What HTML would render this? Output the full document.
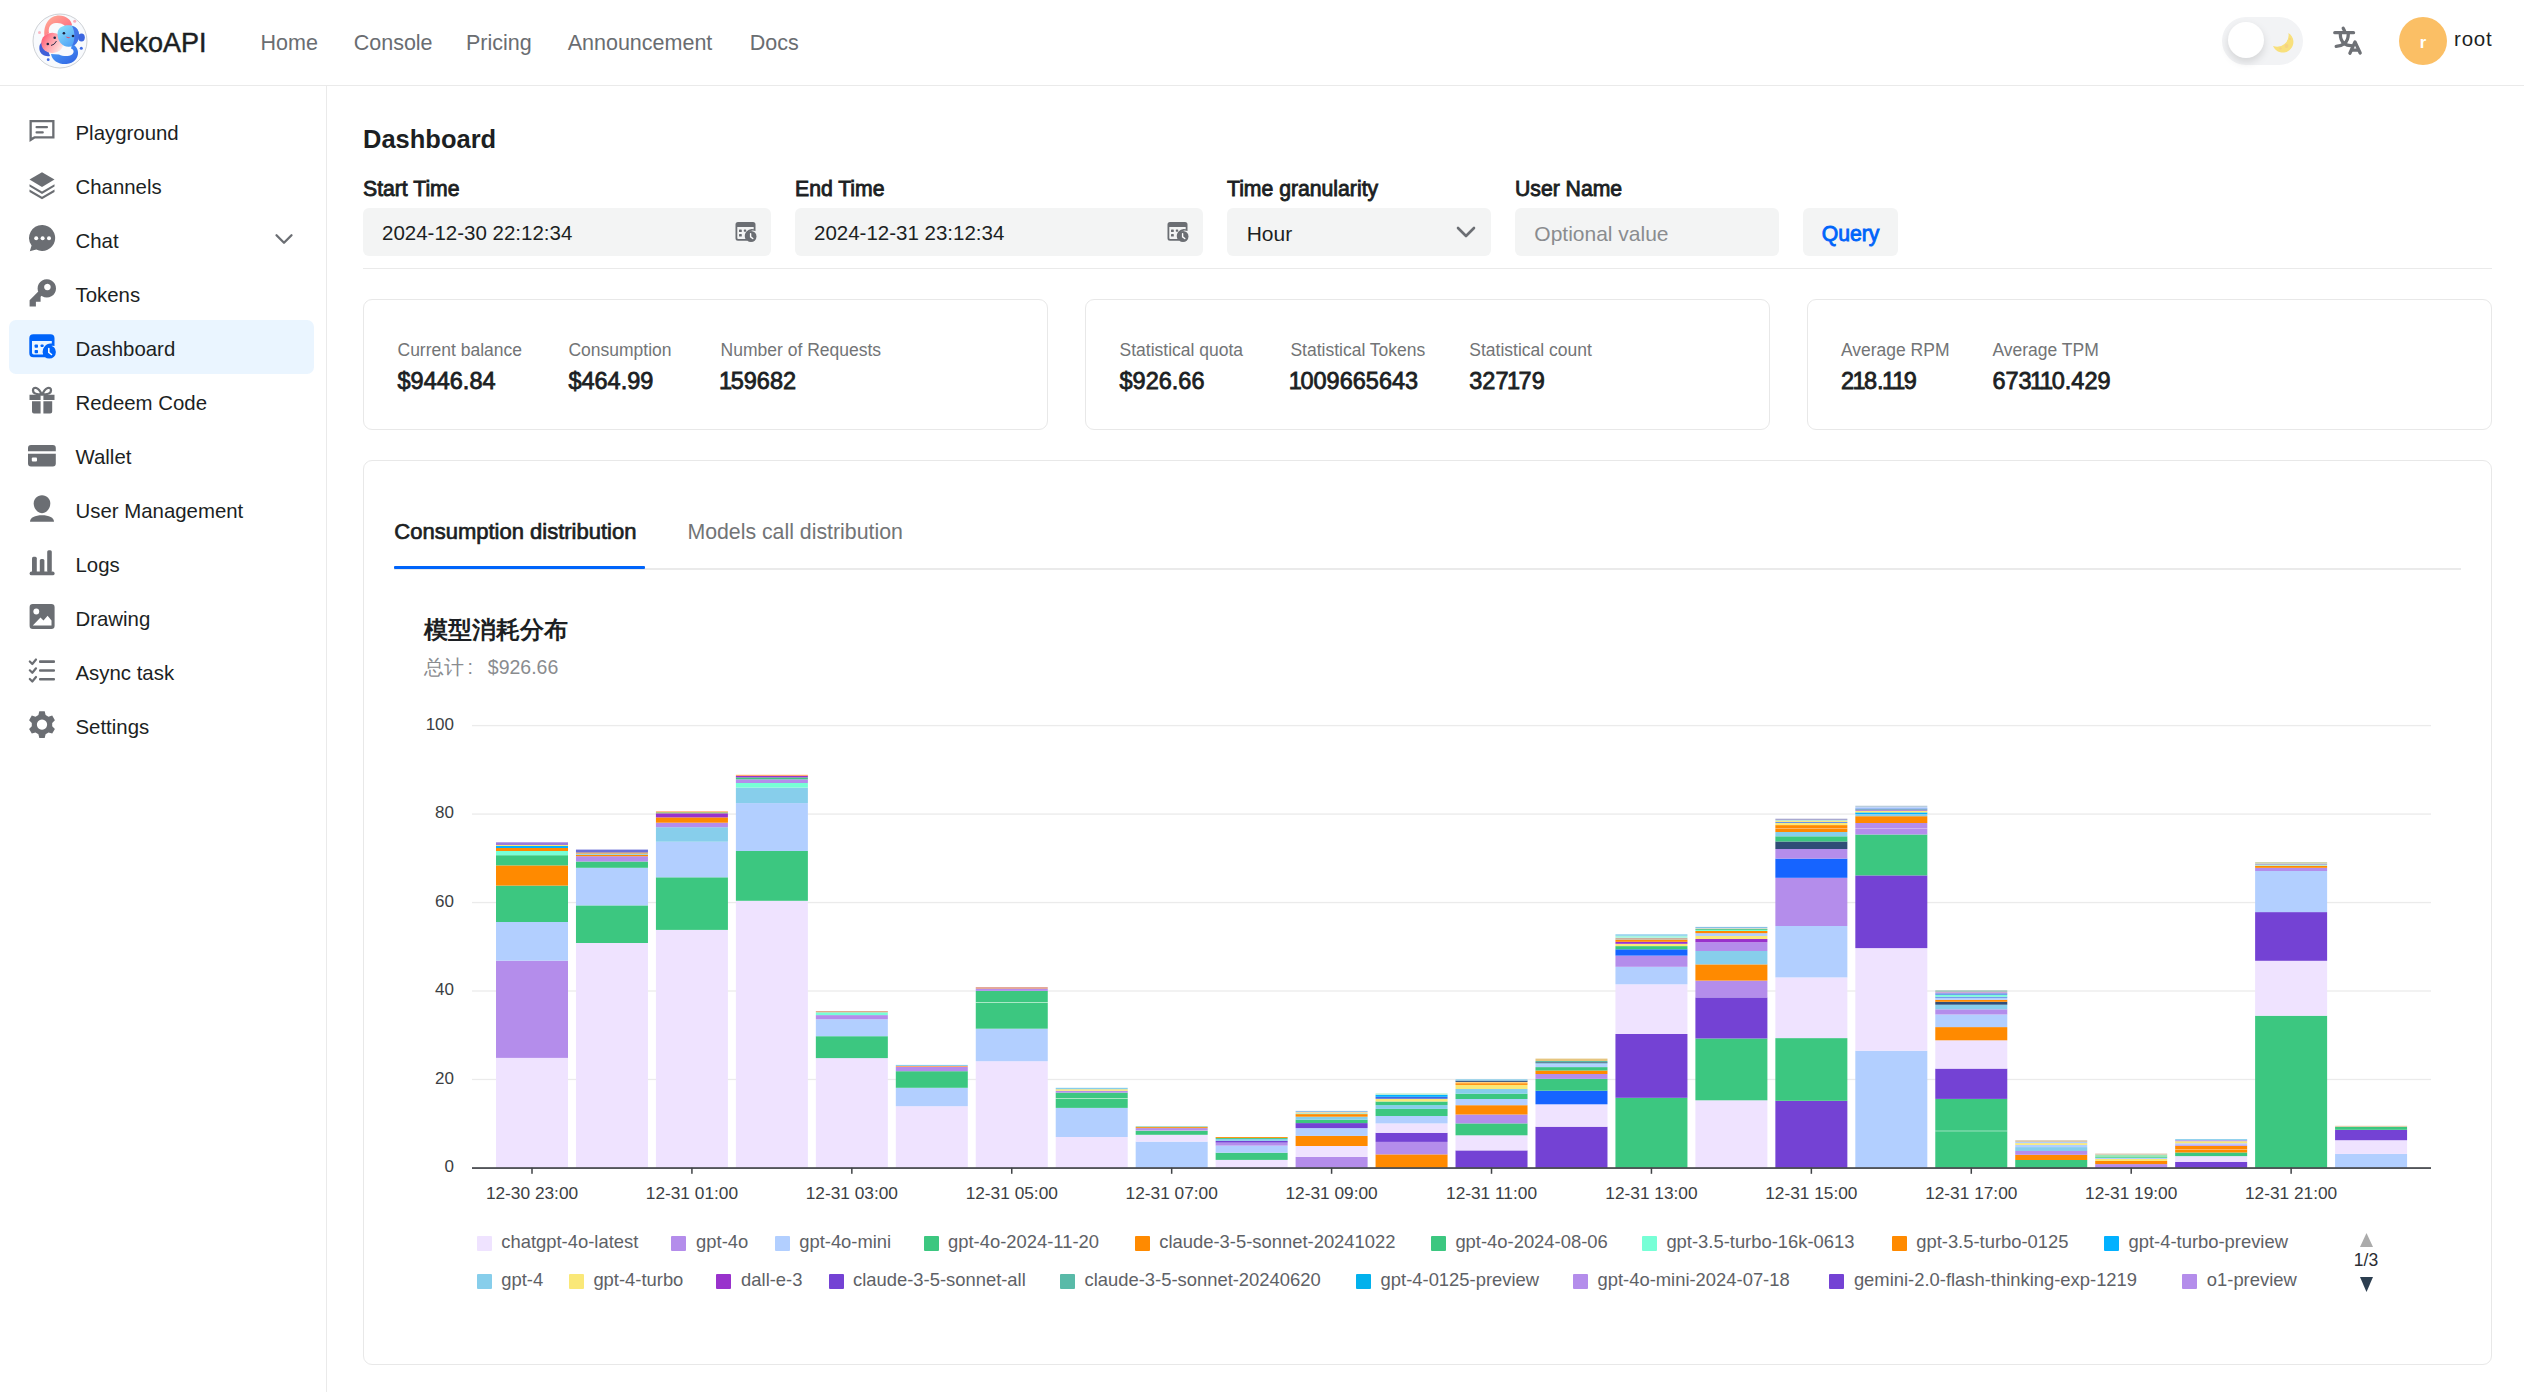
<!DOCTYPE html>
<html><head><meta charset="utf-8"><title>NekoAPI Dashboard</title>
<style>
html,body{margin:0;padding:0;background:#fff;}
body{width:2524px;height:1392px;position:relative;overflow:hidden;font-family:"Liberation Sans",sans-serif;}
.t{position:absolute;white-space:nowrap;}
</style></head><body>
<div style="position:absolute;left:0px;top:85px;width:2524px;height:1px;background:#EAEAEA"></div>
<svg style="position:absolute;left:28px;top:10px" width="64" height="64" viewBox="0 0 64 64">
<defs>
<linearGradient id="gp" x1="0" y1="0" x2="1" y2="1"><stop offset="0" stop-color="#FFB39A"/><stop offset="1" stop-color="#FF5C78"/></linearGradient>
<linearGradient id="gb" x1="0" y1="0" x2="1" y2="1"><stop offset="0" stop-color="#4FA8FF"/><stop offset="1" stop-color="#2F5FE0"/></linearGradient>
<linearGradient id="gc" x1="0" y1="0" x2="0.8" y2="1"><stop offset="0" stop-color="#90E6FA"/><stop offset="1" stop-color="#4A9CF6"/></linearGradient>
<linearGradient id="gf" x1="0" y1="0.3" x2="1" y2="0.9"><stop offset="0" stop-color="#FF5D74"/><stop offset="0.35" stop-color="#FF9AA5"/><stop offset="1" stop-color="#FFF6F0"/></linearGradient>
</defs>
<circle cx="32" cy="31" r="27" fill="#F8FAFD" stroke="#C2C5CA" stroke-width="0.8"/>
<path fill-rule="evenodd" fill="url(#gp)" d="M16.5 26 C15 14 22 5.5 31 5.5 C38 5.5 43.5 10 44 15 L40 22 C38 15 34 12.5 28 13 C22 13.5 20 18 21 23 Z"/>
<path fill="#3F5FD8" d="M11.5 40 C10.5 35 13 31.5 17 31.5 L22 46 C17 47 12.5 44.5 11.5 40 Z"/>
<path fill-rule="evenodd" fill="url(#gb)" d="M23 44 C24 51 31 54.5 38.5 54 C46 53.5 50.5 48 50 42 C49.5 37 46 34.5 44 34.5 L43 38.5 C46 39.5 46.5 42.5 44 44.5 C41 46.5 35 46.5 31 44.5 Z"/>
<ellipse cx="24.3" cy="33" rx="11" ry="10.2" fill="url(#gf)"/>
<path fill="url(#gc)" d="M29.5 24 C29.5 17.5 35 15 41.5 15.3 C47 15.5 51 19 51 25 C51 32 47 37 40.5 36.8 C34 36.5 29.5 31 29.5 24 Z"/>
<ellipse cx="53.5" cy="27.5" rx="3.3" ry="4" fill="#3C66E0"/>
<path fill="#3E6AE4" opacity="0.85" d="M44 16 C49 17 51.5 21 51 26 C50.5 31 48 35 44 36 C47 31 47.5 22 44 16 Z"/>
<circle cx="35.9" cy="23.2" r="1.3" fill="#1D2340"/><circle cx="45" cy="26" r="1.3" fill="#1D2340"/>
<path d="M37.5 26.5 Q40 29.5 42.5 27.5 Z" fill="#E0506A"/>
<circle cx="19.8" cy="34" r="1.3" fill="#1D2340"/><circle cx="26.7" cy="27.8" r="1.3" fill="#1D2340"/>
<path d="M23 35.5 Q26.5 35 28.5 31" stroke="#1D2340" stroke-width="0.9" fill="none"/>
<circle cx="46.7" cy="11.3" r="1.5" fill="#FF8A9A" opacity="0.7"/><circle cx="11.5" cy="22.5" r="1.5" fill="#FF8A9A" opacity="0.6"/>
<circle cx="53.3" cy="38.2" r="1.5" fill="#3E6BE6"/><circle cx="20.2" cy="49.7" r="1.4" fill="#3E6BE6"/>
</svg>
<div class="t" style="left:100px;top:30.14px;font-size:27px;line-height:27px;color:#1C1F23;font-weight:400;-webkit-text-stroke:0.45px #1C1F23;">NekoAPI</div>
<div class="t" style="left:260.6px;top:32.70px;font-size:21.5px;line-height:21.5px;color:#6A6D71;font-weight:400;">Home</div>
<div class="t" style="left:353.7px;top:32.70px;font-size:21.5px;line-height:21.5px;color:#6A6D71;font-weight:400;">Console</div>
<div class="t" style="left:465.9px;top:32.70px;font-size:21.5px;line-height:21.5px;color:#6A6D71;font-weight:400;">Pricing</div>
<div class="t" style="left:567.7px;top:32.70px;font-size:21.5px;line-height:21.5px;color:#6A6D71;font-weight:400;">Announcement</div>
<div class="t" style="left:749.8px;top:32.70px;font-size:21.5px;line-height:21.5px;color:#6A6D71;font-weight:400;">Docs</div>
<div style="position:absolute;left:2222px;top:17px;width:81px;height:48px;background:#F2F3F5;border-radius:24px"></div>
<div style="position:absolute;left:2228px;top:22px;width:36px;height:36px;background:#fff;border-radius:50%;box-shadow:0 4px 8px rgba(0,0,0,0.13)"></div>
<svg style="position:absolute;left:2262px;top:24px" width="40" height="36" viewBox="2262 24 40 36"><path d="M2288.4 33 A10.6 10.6 0 1 1 2273 46 A11.6 11.6 0 0 0 2288.4 33 Z" fill="#F8E07C"/><circle cx="2286.5" cy="46" r="2" fill="#F5D282"/><circle cx="2280.5" cy="48.5" r="1.2" fill="#F5D282"/><circle cx="2290" cy="39" r="1" fill="#F5D282"/></svg>
<svg style="position:absolute;left:2325px;top:20px" width="45" height="42" viewBox="2325 20 45 42">
<g fill="none" stroke="#6E7176" stroke-width="3.3" stroke-linecap="round" stroke-linejoin="round">
<path d="M2334.8 32.7 H2353.5"/><path d="M2343.2 28.3 L2344.6 31"/>
<path d="M2340.3 33.8 C2340.3 38.5 2341.8 41.8 2344.3 43.6 C2346.5 45.2 2349 45.7 2351.3 45.6"/>
<path d="M2348.3 33.8 C2348.3 38.5 2346.8 41.8 2344.3 43.6 C2342 45.3 2339 46.2 2336.2 46.4"/>
<path d="M2349.9 53.2 L2355 41.9 L2360.2 53"/><path d="M2352.2 50.2 H2357.8"/>
</g></svg>
<div style="position:absolute;left:2399px;top:17px;width:48px;height:48px;background:#FBBF65;border-radius:50%"></div>
<div class="t" style="left:2123px;width:600px;text-align:center;top:34.13px;font-size:16.5px;line-height:16.5px;color:#fff;font-weight:700;">r</div>
<div class="t" style="left:2454px;top:28.55px;font-size:20.5px;line-height:20.5px;color:#1C1F23;font-weight:400;letter-spacing:0.8px;">root</div>
<div style="position:absolute;left:326px;top:86px;width:1px;height:1306px;background:#EAEAEA"></div>
<div style="position:absolute;left:9px;top:320px;width:305px;height:54px;background:#EAF5FF;border-radius:7px"></div>
<div class="t" style="left:75.5px;top:122.53px;font-size:20.4px;line-height:20.4px;color:#1C1F23;font-weight:400;">Playground</div>
<div class="t" style="left:75.5px;top:176.53px;font-size:20.4px;line-height:20.4px;color:#1C1F23;font-weight:400;">Channels</div>
<div class="t" style="left:75.5px;top:230.53px;font-size:20.4px;line-height:20.4px;color:#1C1F23;font-weight:400;">Chat</div>
<div class="t" style="left:75.5px;top:284.53px;font-size:20.4px;line-height:20.4px;color:#1C1F23;font-weight:400;">Tokens</div>
<div class="t" style="left:75.5px;top:338.53px;font-size:20.4px;line-height:20.4px;color:#1C1F23;font-weight:400;">Dashboard</div>
<div class="t" style="left:75.5px;top:392.53px;font-size:20.4px;line-height:20.4px;color:#1C1F23;font-weight:400;">Redeem Code</div>
<div class="t" style="left:75.5px;top:446.53px;font-size:20.4px;line-height:20.4px;color:#1C1F23;font-weight:400;">Wallet</div>
<div class="t" style="left:75.5px;top:500.53px;font-size:20.4px;line-height:20.4px;color:#1C1F23;font-weight:400;">User Management</div>
<div class="t" style="left:75.5px;top:554.53px;font-size:20.4px;line-height:20.4px;color:#1C1F23;font-weight:400;">Logs</div>
<div class="t" style="left:75.5px;top:608.53px;font-size:20.4px;line-height:20.4px;color:#1C1F23;font-weight:400;">Drawing</div>
<div class="t" style="left:75.5px;top:662.53px;font-size:20.4px;line-height:20.4px;color:#1C1F23;font-weight:400;">Async task</div>
<div class="t" style="left:75.5px;top:716.53px;font-size:20.4px;line-height:20.4px;color:#1C1F23;font-weight:400;">Settings</div>
<svg style="position:absolute;left:0;top:86px" width="326" height="700" viewBox="0 86 326 700">
<g fill="#6B6E73" stroke="none">
<!-- playground -->
<path d="M29.5 120 H54.5 V138.5 H35 L29.5 142 Z M31.8 122.2 V137.5 L34.3 136.3 H52.2 V122.2 Z"/>
<rect x="35.5" y="126" width="12.5" height="2.3" rx="1"/><rect x="35.5" y="131.2" width="8.3" height="2.3" rx="1"/>
<!-- channels -->
<path d="M42 172.3 L54.5 179.6 L42 187 L29.5 179.6 Z"/>
<path d="M29.5 184.3 L42 191.5 L54.5 184.3 V186.6 L42 193.9 L29.5 186.6 Z"/>
<path d="M29.5 189.6 L42 196.8 L54.5 189.6 V191.9 L42 199.2 L29.5 191.9 Z"/>
<!-- chat -->
<path d="M42.6 225 A13 13 0 1 1 36.3 249.6 L29.8 251.3 L31.6 245.6 A13 13 0 0 1 42.6 225 Z"/>
<circle cx="36.2" cy="238.2" r="2" fill="#fff"/><circle cx="42.6" cy="238.2" r="2" fill="#fff"/><circle cx="49" cy="238.2" r="2" fill="#fff"/>
<!-- key -->
<path fill-rule="evenodd" d="M46.8 279.2 A9.2 9.2 0 1 1 46.79 279.2 Z M47.4 283.7 A3.3 3.3 0 1 0 47.41 283.7 Z"/>
<path d="M38.3 291.6 L29.6 300.3 V306.5 H35.9 V301.7 H40.6 V296.7 L44 293.5 Z"/>
<!-- gift -->
<path d="M29.5 394.7 H40.6 V400 H29.5 Z M43.4 394.7 H54.5 V400 H43.4 Z M32 401.3 H40.6 V413.4 H34 A2 2 0 0 1 32 411.4 Z M43.4 401.3 H52.2 V411.4 A2 2 0 0 1 50.2 413.4 H43.4 Z"/>
<path d="M41.5 394.5 C39 387 33 386 33 390.5 C33 393 36 394.5 41.5 394.5 Z M42.5 394.5 C45 387 51 386 51 390.5 C51 393 48 394.5 42.5 394.5 Z" fill="none" stroke="#6B6E73" stroke-width="2.3"/>
<!-- wallet -->
<path d="M31 445 H52.8 A3 3 0 0 1 55.8 448 V451.2 H28 V448 A3 3 0 0 1 31 445 Z M28 453.8 H55.8 V463.5 A3 3 0 0 1 52.8 466.5 H31 A3 3 0 0 1 28 463.5 Z"/>
<rect x="31.8" y="457.5" width="5.2" height="4" rx="1" fill="#fff"/>
<!-- user -->
<path d="M42 495.3 C47 495.3 50.3 499 50.3 503.5 C50.3 508.5 46.5 513.2 42 513.2 C37.5 513.2 33.7 508.5 33.7 503.5 C33.7 499 37 495.3 42 495.3 Z"/>
<path d="M30 521.8 C30 517.5 35 515.3 42 515.3 C49 515.3 54 517.5 54 521.8 Z"/>
<!-- logs -->
<rect x="32" y="556.8" width="4.8" height="16" rx="1.5"/><rect x="39.8" y="559" width="4.6" height="14" rx="1.5"/><rect x="47.2" y="550.3" width="4.6" height="22" rx="1.5"/>
<rect x="29.6" y="571.5" width="25" height="3.8" rx="1.9"/>
<!-- drawing -->
<path d="M33 604 H51.3 A3.3 3.3 0 0 1 54.6 607.3 V625.7 A3.3 3.3 0 0 1 51.3 629 H33 A3.3 3.3 0 0 1 29.6 625.7 V607.3 A3.3 3.3 0 0 1 33 604 Z"/>
<circle cx="36.3" cy="611.5" r="2.9" fill="#fff"/>
<path d="M32.8 625.6 L40.5 617.5 L43.5 620.5 L47.6 615.8 L51.5 620.5 V625.6 Z" fill="#fff"/>
<!-- async task -->
<g fill="none" stroke="#6B6E73" stroke-width="2.2" stroke-linecap="round" stroke-linejoin="round">
<path d="M29.8 661.5 L32.3 664 L36 659.5"/><path d="M29.8 670.3 L32.3 672.8 L36 668.3"/><path d="M29.8 679 L32.3 681.5 L36 677"/>
</g>
<rect x="39" y="660.3" width="16" height="2.6" rx="1"/><rect x="39" y="669.2" width="16" height="2.6" rx="1"/><rect x="39" y="677.9" width="16" height="2.6" rx="1"/>
<!-- settings -->
<path fill-rule="evenodd" d="M39.3 711.3 H44.7 L45.6 715 L48.5 716.7 L52.2 715.6 L54.9 720.2 L52.2 723 V726.2 L54.9 729 L52.2 733.6 L48.5 732.5 L45.6 734.2 L44.7 737.9 H39.3 L38.4 734.2 L35.5 732.5 L31.8 733.6 L29.1 729 L31.8 726.2 V723 L29.1 720.2 L31.8 715.6 L35.5 716.7 L38.4 715 Z M42 719.5 A5.1 5.1 0 1 0 42.01 719.5 Z"/>
<!-- chevron chat -->
<path d="M276.5 235.3 L284 242.8 L291.5 235.3" fill="none" stroke="#6B6E73" stroke-width="2.3" stroke-linecap="round" stroke-linejoin="round"/>
</g>
<!-- dashboard icon blue -->
<g>
<path fill="#0064FA" fill-rule="evenodd" d="M33.3 334.3 H50.5 A4 4 0 0 1 54.5 338.3 V346 A7.5 7.5 0 0 0 45.5 355.5 L46 357.3 H33.3 A4 4 0 0 1 29.3 353.3 V338.3 A4 4 0 0 1 33.3 334.3 Z M32 341 V352.8 A1.8 1.8 0 0 0 33.8 354.6 H43.5 A8 8 0 0 1 51.8 343.5 V341 Z"/>
<rect x="34.6" y="344.5" width="3.4" height="3.2" rx="0.8" fill="#0064FA"/><rect x="34.6" y="350" width="3.4" height="3.2" rx="0.8" fill="#0064FA"/>
<rect x="40.6" y="344.5" width="3" height="2.6" rx="0.8" fill="#0064FA"/>
<circle cx="49.3" cy="352" r="6.6" fill="#0064FA"/>
<path d="M48.8 348.5 V352.3 L51.5 354.5" fill="none" stroke="#fff" stroke-width="1.6" stroke-linecap="round"/>
</g>
</svg>
<div class="t" style="left:363px;top:127.31px;font-size:25.5px;line-height:25.5px;color:#1C1F23;font-weight:700;">Dashboard</div>
<div class="t" style="left:363px;top:178.35px;font-size:21.2px;line-height:21.2px;color:#1C1F23;font-weight:400;-webkit-text-stroke:0.85px currentColor;">Start Time</div>
<div class="t" style="left:795px;top:178.35px;font-size:21.2px;line-height:21.2px;color:#1C1F23;font-weight:400;-webkit-text-stroke:0.85px currentColor;">End Time</div>
<div class="t" style="left:1227px;top:178.35px;font-size:21.2px;line-height:21.2px;color:#1C1F23;font-weight:400;-webkit-text-stroke:0.85px currentColor;">Time granularity</div>
<div class="t" style="left:1515px;top:178.35px;font-size:21.2px;line-height:21.2px;color:#1C1F23;font-weight:400;-webkit-text-stroke:0.85px currentColor;">User Name</div>
<div style="position:absolute;left:363px;top:208px;width:408px;height:48px;background:#F3F4F4;border-radius:6px"></div>
<div style="position:absolute;left:795px;top:208px;width:408px;height:48px;background:#F3F4F4;border-radius:6px"></div>
<div class="t" style="left:382px;top:222.85px;font-size:20.5px;line-height:20.5px;color:#1C1F23;font-weight:400;">2024-12-30 22:12:34</div>
<div class="t" style="left:814px;top:222.85px;font-size:20.5px;line-height:20.5px;color:#1C1F23;font-weight:400;">2024-12-31 23:12:34</div>
<svg style="position:absolute;left:735px;top:221px" width="22" height="22" viewBox="0 0 22 22">
<path fill="#6B6E73" fill-rule="evenodd" d="M3 1 H18 A2.5 2.5 0 0 1 20.5 3.5 V10 A6.5 6.5 0 0 0 12 18.5 L12.3 19.8 H3 A2.5 2.5 0 0 1 0.5 17.3 V3.5 A2.5 2.5 0 0 1 3 1 Z M2.3 6 V17 A1 1 0 0 0 3.3 18 H10.5 A7 7 0 0 1 18.7 8.3 V6 Z"/>
<rect x="4" y="8.5" width="2.8" height="2.6" rx="0.6" fill="#6B6E73"/><rect x="4" y="13" width="2.8" height="2.6" rx="0.6" fill="#6B6E73"/><rect x="8.8" y="8.5" width="2.4" height="2.2" rx="0.6" fill="#6B6E73"/>
<circle cx="16" cy="15.5" r="5.5" fill="#6B6E73"/><path d="M15.6 12.6 V15.8 L17.8 17.5" fill="none" stroke="#fff" stroke-width="1.4" stroke-linecap="round"/>
</svg>
<svg style="position:absolute;left:1167px;top:221px" width="22" height="22" viewBox="0 0 22 22">
<path fill="#6B6E73" fill-rule="evenodd" d="M3 1 H18 A2.5 2.5 0 0 1 20.5 3.5 V10 A6.5 6.5 0 0 0 12 18.5 L12.3 19.8 H3 A2.5 2.5 0 0 1 0.5 17.3 V3.5 A2.5 2.5 0 0 1 3 1 Z M2.3 6 V17 A1 1 0 0 0 3.3 18 H10.5 A7 7 0 0 1 18.7 8.3 V6 Z"/>
<rect x="4" y="8.5" width="2.8" height="2.6" rx="0.6" fill="#6B6E73"/><rect x="4" y="13" width="2.8" height="2.6" rx="0.6" fill="#6B6E73"/><rect x="8.8" y="8.5" width="2.4" height="2.2" rx="0.6" fill="#6B6E73"/>
<circle cx="16" cy="15.5" r="5.5" fill="#6B6E73"/><path d="M15.6 12.6 V15.8 L17.8 17.5" fill="none" stroke="#fff" stroke-width="1.4" stroke-linecap="round"/>
</svg>
<div style="position:absolute;left:1227px;top:208px;width:264px;height:48px;background:#F3F4F4;border-radius:6px"></div>
<div class="t" style="left:1246.7px;top:222.82px;font-size:21px;line-height:21px;color:#1C1F23;font-weight:400;">Hour</div>
<svg style="position:absolute;left:1455px;top:225px" width="22" height="14" viewBox="0 0 22 14"><path d="M3 3 L11 11 L19 3" fill="none" stroke="#6B6E73" stroke-width="2.6" stroke-linecap="round" stroke-linejoin="round"/></svg>
<div style="position:absolute;left:1515px;top:208px;width:264px;height:48px;background:#F3F4F4;border-radius:6px"></div>
<div class="t" style="left:1534.3px;top:222.82px;font-size:21px;line-height:21px;color:#8A8C8F;font-weight:400;">Optional value</div>
<div style="position:absolute;left:1803px;top:208px;width:95px;height:48px;background:#F3F4F4;border-radius:6px"></div>
<div class="t" style="left:1821.7px;top:222.65px;font-size:21.2px;line-height:21.2px;color:#0064FA;font-weight:400;-webkit-text-stroke:0.85px currentColor;">Query</div>
<div style="position:absolute;left:363px;top:268px;width:2129px;height:1px;background:#EAEAEA"></div>
<div style="position:absolute;left:363px;top:299px;width:685px;height:131px;box-sizing:border-box;border:1px solid #E8E8E8;border-radius:9px;background:#fff"></div>
<div style="position:absolute;left:1085px;top:299px;width:685px;height:131px;box-sizing:border-box;border:1px solid #E8E8E8;border-radius:9px;background:#fff"></div>
<div style="position:absolute;left:1807px;top:299px;width:685px;height:131px;box-sizing:border-box;border:1px solid #E8E8E8;border-radius:9px;background:#fff"></div>
<div class="t" style="left:397.5px;top:342.19px;font-size:17.5px;line-height:17.5px;color:#727476;font-weight:400;">Current balance</div>
<div class="t" style="left:397.5px;top:370.11px;font-size:23.5px;line-height:23.5px;color:#1C1F23;font-weight:400;-webkit-text-stroke:0.8px currentColor;">$9446.84</div>
<div class="t" style="left:568.4px;top:342.19px;font-size:17.5px;line-height:17.5px;color:#727476;font-weight:400;">Consumption</div>
<div class="t" style="left:568.4px;top:370.11px;font-size:23.5px;line-height:23.5px;color:#1C1F23;font-weight:400;-webkit-text-stroke:0.8px currentColor;">$464.99</div>
<div class="t" style="left:720.6px;top:342.19px;font-size:17.5px;line-height:17.5px;color:#727476;font-weight:400;">Number of Requests</div>
<div class="t" style="left:720.6px;top:370.11px;font-size:23.5px;line-height:23.5px;color:#1C1F23;font-weight:400;-webkit-text-stroke:0.8px currentColor;"><span style="margin-left:-1.6px;letter-spacing:-1.4px">1</span>59682</div>
<div class="t" style="left:1119.5px;top:342.19px;font-size:17.5px;line-height:17.5px;color:#727476;font-weight:400;">Statistical quota</div>
<div class="t" style="left:1119.5px;top:370.11px;font-size:23.5px;line-height:23.5px;color:#1C1F23;font-weight:400;-webkit-text-stroke:0.8px currentColor;">$926.66</div>
<div class="t" style="left:1290.4px;top:342.19px;font-size:17.5px;line-height:17.5px;color:#727476;font-weight:400;">Statistical Tokens</div>
<div class="t" style="left:1290.4px;top:370.11px;font-size:23.5px;line-height:23.5px;color:#1C1F23;font-weight:400;-webkit-text-stroke:0.8px currentColor;"><span style="margin-left:-1.6px;letter-spacing:-1.4px">1</span>009665643</div>
<div class="t" style="left:1469.3px;top:342.19px;font-size:17.5px;line-height:17.5px;color:#727476;font-weight:400;">Statistical count</div>
<div class="t" style="left:1469.3px;top:370.11px;font-size:23.5px;line-height:23.5px;color:#1C1F23;font-weight:400;-webkit-text-stroke:0.8px currentColor;">327<span style="margin-left:-1.6px;letter-spacing:-1.4px">1</span>79</div>
<div class="t" style="left:1840.9px;top:342.19px;font-size:17.5px;line-height:17.5px;color:#727476;font-weight:400;">Average RPM</div>
<div class="t" style="left:1840.9px;top:370.11px;font-size:23.5px;line-height:23.5px;color:#1C1F23;font-weight:400;-webkit-text-stroke:0.8px currentColor;">2<span style="margin-left:-1.6px;letter-spacing:-1.4px">1</span>8.<span style="margin-left:-1.6px;letter-spacing:-1.4px">1</span><span style="margin-left:-1.6px;letter-spacing:-1.4px">1</span>9</div>
<div class="t" style="left:1992.4px;top:342.19px;font-size:17.5px;line-height:17.5px;color:#727476;font-weight:400;">Average TPM</div>
<div class="t" style="left:1992.4px;top:370.11px;font-size:23.5px;line-height:23.5px;color:#1C1F23;font-weight:400;-webkit-text-stroke:0.8px currentColor;">673<span style="margin-left:-1.6px;letter-spacing:-1.4px">1</span><span style="margin-left:-1.6px;letter-spacing:-1.4px">1</span>0.429</div>
<div style="position:absolute;left:363px;top:460px;width:2129px;height:905px;box-sizing:border-box;border:1px solid #E8E8E8;border-radius:9px;background:#fff"></div>
<div class="t" style="left:394.3px;top:521.18px;font-size:22px;line-height:22px;color:#1C1F23;font-weight:400;-webkit-text-stroke:0.7px currentColor;">Consumption distribution</div>
<div class="t" style="left:687.4px;top:521.97px;font-size:21.3px;line-height:21.3px;color:#727476;font-weight:400;">Models call distribution</div>
<div style="position:absolute;left:394px;top:568px;width:2067px;height:1.5px;background:#EAEAEA"></div>
<div style="position:absolute;left:394px;top:566px;width:251px;height:3px;background:#0064FA;border-radius:1px"></div>
<div class="t" style="left:424px;top:618.61px;font-size:23.5px;line-height:23.5px;color:#1C1F23;font-weight:700;">模型消耗分布</div>
<div class="t" style="left:424px;top:657.79px;font-size:19.5px;line-height:19.5px;color:#8A8C8F;font-weight:400;">总计</div>
<div class="t" style="left:467.5px;top:657.79px;font-size:19.5px;line-height:19.5px;color:#8A8C8F;font-weight:400;">:</div>
<div class="t" style="left:487.8px;top:657.79px;font-size:19.5px;line-height:19.5px;color:#8A8C8F;font-weight:400;">$926.66</div>
<svg style="position:absolute;left:0;top:0" width="2524" height="1392" viewBox="0 0 2524 1392"><rect x="472" y="1078.83" width="1959" height="1.3" fill="#EBEBEB"/><rect x="472" y="990.36" width="1959" height="1.3" fill="#EBEBEB"/><rect x="472" y="901.89" width="1959" height="1.3" fill="#EBEBEB"/><rect x="472" y="813.42" width="1959" height="1.3" fill="#EBEBEB"/><rect x="472" y="724.95" width="1959" height="1.3" fill="#EBEBEB"/><rect x="496.0" y="1057.90" width="72" height="109.90" fill="#EFE3FF"/><rect x="496.0" y="960.70" width="72" height="97.20" fill="#B48DEB"/><rect x="496.0" y="922.00" width="72" height="38.70" fill="#B2CFFF"/><rect x="496.0" y="885.60" width="72" height="36.40" fill="#3CC780"/><rect x="496.0" y="865.40" width="72" height="20.20" fill="#FF8A00"/><rect x="496.0" y="855.20" width="72" height="10.20" fill="#3CC780"/><rect x="496.0" y="851.00" width="72" height="4.20" fill="#77FFD6"/><rect x="496.0" y="848.00" width="72" height="3.00" fill="#FF8A00"/><rect x="496.0" y="846.00" width="72" height="2.00" fill="#02B1FF"/><rect x="496.0" y="845.00" width="72" height="1.00" fill="#FAE878"/><rect x="496.0" y="842.30" width="72" height="2.70" fill="#9A7BDD"/><rect x="575.96" y="943.00" width="72" height="224.80" fill="#EFE3FF"/><rect x="575.96" y="905.40" width="72" height="37.60" fill="#3CC780"/><rect x="575.96" y="867.80" width="72" height="37.60" fill="#B2CFFF"/><rect x="575.96" y="861.50" width="72" height="6.30" fill="#3CC780"/><rect x="575.96" y="856.20" width="72" height="5.30" fill="#B48DEB"/><rect x="575.96" y="854.80" width="72" height="1.40" fill="#FF8A00"/><rect x="575.96" y="853.50" width="72" height="1.30" fill="#87CEEB"/><rect x="575.96" y="852.50" width="72" height="1.00" fill="#FF8A00"/><rect x="575.96" y="849.60" width="72" height="2.90" fill="#6A6FD8"/><rect x="655.92" y="929.90" width="72" height="237.90" fill="#EFE3FF"/><rect x="655.92" y="877.30" width="72" height="52.60" fill="#3CC780"/><rect x="655.92" y="841.70" width="72" height="35.60" fill="#B2CFFF"/><rect x="655.92" y="827.20" width="72" height="14.50" fill="#87CEEB"/><rect x="655.92" y="822.70" width="72" height="4.50" fill="#B48DEB"/><rect x="655.92" y="817.40" width="72" height="5.30" fill="#FF8A00"/><rect x="655.92" y="813.30" width="72" height="4.10" fill="#9932CC"/><rect x="655.92" y="812.10" width="72" height="1.20" fill="#9CC870"/><rect x="655.92" y="811.20" width="72" height="0.90" fill="#FFB070"/><rect x="735.88" y="900.80" width="72" height="267.00" fill="#EFE3FF"/><rect x="735.88" y="851.00" width="72" height="49.80" fill="#3CC780"/><rect x="735.88" y="803.10" width="72" height="47.90" fill="#B2CFFF"/><rect x="735.88" y="787.60" width="72" height="15.50" fill="#87CEEB"/><rect x="735.88" y="783.00" width="72" height="4.60" fill="#77FFD6"/><rect x="735.88" y="779.30" width="72" height="3.70" fill="#B48DEB"/><rect x="735.88" y="777.40" width="72" height="1.90" fill="#3CC780"/><rect x="735.88" y="775.90" width="72" height="1.50" fill="#9932CC"/><rect x="735.88" y="774.80" width="72" height="1.10" fill="#FFA060"/><rect x="815.8399999999999" y="1058.10" width="72" height="109.70" fill="#EFE3FF"/><rect x="815.8399999999999" y="1036.20" width="72" height="21.90" fill="#3CC780"/><rect x="815.8399999999999" y="1019.20" width="72" height="17.00" fill="#B2CFFF"/><rect x="815.8399999999999" y="1015.10" width="72" height="4.10" fill="#B48DEB"/><rect x="815.8399999999999" y="1012.30" width="72" height="2.80" fill="#77FFD6"/><rect x="815.8399999999999" y="1011.10" width="72" height="1.20" fill="#E0A080"/><rect x="895.8" y="1106.20" width="72" height="61.60" fill="#EFE3FF"/><rect x="895.8" y="1087.80" width="72" height="18.40" fill="#B2CFFF"/><rect x="895.8" y="1071.20" width="72" height="16.60" fill="#3CC780"/><rect x="895.8" y="1066.90" width="72" height="4.30" fill="#B48DEB"/><rect x="895.8" y="1066.00" width="72" height="0.90" fill="#FFA060"/><rect x="895.8" y="1064.90" width="72" height="1.10" fill="#87CEEB"/><rect x="975.76" y="1061.20" width="72" height="106.60" fill="#EFE3FF"/><rect x="975.76" y="1028.70" width="72" height="32.50" fill="#B2CFFF"/><rect x="975.76" y="1002.50" width="72" height="26.20" fill="#3CC780"/><rect x="975.76" y="1002.00" width="72" height="0.50" fill="#B9EDCD"/><rect x="975.76" y="990.90" width="72" height="11.10" fill="#3CC780"/><rect x="975.76" y="988.90" width="72" height="2.00" fill="#B48DEB"/><rect x="975.76" y="987.10" width="72" height="1.80" fill="#E0A090"/><rect x="1055.7199999999998" y="1137.00" width="72" height="30.80" fill="#EFE3FF"/><rect x="1055.7199999999998" y="1107.90" width="72" height="29.10" fill="#B2CFFF"/><rect x="1055.7199999999998" y="1098.60" width="72" height="9.30" fill="#3CC780"/><rect x="1055.7199999999998" y="1098.10" width="72" height="0.50" fill="#B9EDCD"/><rect x="1055.7199999999998" y="1092.60" width="72" height="5.50" fill="#3CC780"/><rect x="1055.7199999999998" y="1090.80" width="72" height="1.80" fill="#B48DEB"/><rect x="1055.7199999999998" y="1089.20" width="72" height="1.60" fill="#FAE878"/><rect x="1055.7199999999998" y="1087.80" width="72" height="1.40" fill="#87CEEB"/><rect x="1135.6799999999998" y="1141.60" width="72" height="26.20" fill="#B2CFFF"/><rect x="1135.6799999999998" y="1134.80" width="72" height="6.80" fill="#EFE3FF"/><rect x="1135.6799999999998" y="1131.00" width="72" height="3.80" fill="#3CC780"/><rect x="1135.6799999999998" y="1130.50" width="72" height="0.50" fill="#9BD8B0"/><rect x="1135.6799999999998" y="1128.10" width="72" height="2.40" fill="#B48DEB"/><rect x="1135.6799999999998" y="1127.10" width="72" height="1.00" fill="#FF8A00"/><rect x="1135.6799999999998" y="1126.20" width="72" height="0.90" fill="#9CD8C0"/><rect x="1215.6399999999999" y="1159.90" width="72" height="7.90" fill="#EFE3FF"/><rect x="1215.6399999999999" y="1152.70" width="72" height="7.20" fill="#3CC780"/><rect x="1215.6399999999999" y="1145.60" width="72" height="7.10" fill="#B2CFFF"/><rect x="1215.6399999999999" y="1142.60" width="72" height="3.00" fill="#B48DEB"/><rect x="1215.6399999999999" y="1140.90" width="72" height="1.70" fill="#7442D4"/><rect x="1215.6399999999999" y="1138.90" width="72" height="2.00" fill="#87CEEB"/><rect x="1215.6399999999999" y="1137.90" width="72" height="1.00" fill="#3CC780"/><rect x="1215.6399999999999" y="1137.00" width="72" height="0.90" fill="#FF8A00"/><rect x="1295.6" y="1156.90" width="72" height="10.90" fill="#B48DEB"/><rect x="1295.6" y="1146.00" width="72" height="10.90" fill="#EFE3FF"/><rect x="1295.6" y="1135.90" width="72" height="10.10" fill="#FF8A00"/><rect x="1295.6" y="1128.10" width="72" height="7.80" fill="#B2CFFF"/><rect x="1295.6" y="1123.10" width="72" height="5.00" fill="#7442D4"/><rect x="1295.6" y="1119.70" width="72" height="3.40" fill="#3CC780"/><rect x="1295.6" y="1116.70" width="72" height="3.00" fill="#87CEEB"/><rect x="1295.6" y="1114.10" width="72" height="2.60" fill="#FF8A00"/><rect x="1295.6" y="1113.00" width="72" height="1.10" fill="#B9EDCD"/><rect x="1295.6" y="1111.90" width="72" height="1.10" fill="#F0D8B0"/><rect x="1295.6" y="1110.90" width="72" height="1.00" fill="#87B8E8"/><rect x="1375.56" y="1154.40" width="72" height="13.40" fill="#FF8A00"/><rect x="1375.56" y="1141.90" width="72" height="12.50" fill="#B48DEB"/><rect x="1375.56" y="1132.80" width="72" height="9.10" fill="#7442D4"/><rect x="1375.56" y="1123.40" width="72" height="9.40" fill="#EFE3FF"/><rect x="1375.56" y="1116.00" width="72" height="7.40" fill="#B2CFFF"/><rect x="1375.56" y="1108.90" width="72" height="7.10" fill="#3CC780"/><rect x="1375.56" y="1105.10" width="72" height="3.80" fill="#87CEEB"/><rect x="1375.56" y="1101.50" width="72" height="3.60" fill="#3CC780"/><rect x="1375.56" y="1098.80" width="72" height="2.70" fill="#FAE878"/><rect x="1375.56" y="1096.80" width="72" height="2.00" fill="#4169E1"/><rect x="1375.56" y="1094.80" width="72" height="2.00" fill="#02B1FF"/><rect x="1375.56" y="1093.40" width="72" height="1.40" fill="#B9EDCD"/><rect x="1455.52" y="1150.40" width="72" height="17.40" fill="#7442D4"/><rect x="1455.52" y="1135.30" width="72" height="15.10" fill="#EFE3FF"/><rect x="1455.52" y="1123.40" width="72" height="11.90" fill="#3CC780"/><rect x="1455.52" y="1114.50" width="72" height="8.90" fill="#B48DEB"/><rect x="1455.52" y="1105.20" width="72" height="9.30" fill="#FF8A00"/><rect x="1455.52" y="1099.00" width="72" height="6.20" fill="#B2CFFF"/><rect x="1455.52" y="1093.70" width="72" height="5.30" fill="#3CC780"/><rect x="1455.52" y="1089.00" width="72" height="4.70" fill="#87CEEB"/><rect x="1455.52" y="1084.90" width="72" height="4.10" fill="#FAE878"/><rect x="1455.52" y="1083.20" width="72" height="1.70" fill="#FF8A00"/><rect x="1455.52" y="1081.90" width="72" height="1.30" fill="#FFCE7A"/><rect x="1455.52" y="1080.60" width="72" height="1.30" fill="#304D77"/><rect x="1455.52" y="1079.30" width="72" height="1.30" fill="#87CEEB"/><rect x="1535.48" y="1126.70" width="72" height="41.10" fill="#7442D4"/><rect x="1535.48" y="1104.30" width="72" height="22.40" fill="#EFE3FF"/><rect x="1535.48" y="1090.70" width="72" height="13.60" fill="#1664FF"/><rect x="1535.48" y="1078.90" width="72" height="11.80" fill="#3CC780"/><rect x="1535.48" y="1074.00" width="72" height="4.90" fill="#B48DEB"/><rect x="1535.48" y="1070.50" width="72" height="3.50" fill="#FF8A00"/><rect x="1535.48" y="1067.10" width="72" height="3.40" fill="#3CC780"/><rect x="1535.48" y="1064.20" width="72" height="2.90" fill="#B2CFFF"/><rect x="1535.48" y="1063.10" width="72" height="1.10" fill="#87CEEB"/><rect x="1535.48" y="1062.10" width="72" height="1.00" fill="#5A7090"/><rect x="1535.48" y="1061.00" width="72" height="1.10" fill="#59BAA8"/><rect x="1535.48" y="1058.60" width="72" height="2.40" fill="#E5C580"/><rect x="1615.4399999999998" y="1097.80" width="72" height="70.00" fill="#3CC780"/><rect x="1615.4399999999998" y="1034.00" width="72" height="63.80" fill="#7442D4"/><rect x="1615.4399999999998" y="984.30" width="72" height="49.70" fill="#EFE3FF"/><rect x="1615.4399999999998" y="966.80" width="72" height="17.50" fill="#B2CFFF"/><rect x="1615.4399999999998" y="955.60" width="72" height="11.20" fill="#B48DEB"/><rect x="1615.4399999999998" y="949.30" width="72" height="6.30" fill="#1664FF"/><rect x="1615.4399999999998" y="946.10" width="72" height="3.20" fill="#3CC780"/><rect x="1615.4399999999998" y="943.80" width="72" height="2.30" fill="#FAE878"/><rect x="1615.4399999999998" y="941.80" width="72" height="2.00" fill="#9932CC"/><rect x="1615.4399999999998" y="939.70" width="72" height="2.10" fill="#FF8A00"/><rect x="1615.4399999999998" y="937.80" width="72" height="1.90" fill="#C8B0A0"/><rect x="1615.4399999999998" y="935.80" width="72" height="2.00" fill="#A8F5DE"/><rect x="1615.4399999999998" y="934.30" width="72" height="1.50" fill="#87CEEB"/><rect x="1695.3999999999999" y="1100.30" width="72" height="67.50" fill="#EFE3FF"/><rect x="1695.3999999999999" y="1038.50" width="72" height="61.80" fill="#3CC780"/><rect x="1695.3999999999999" y="997.40" width="72" height="41.10" fill="#7442D4"/><rect x="1695.3999999999999" y="980.60" width="72" height="16.80" fill="#B48DEB"/><rect x="1695.3999999999999" y="964.40" width="72" height="16.20" fill="#FF8A00"/><rect x="1695.3999999999999" y="951.00" width="72" height="13.40" fill="#87CEEB"/><rect x="1695.3999999999999" y="942.20" width="72" height="8.80" fill="#B48DEB"/><rect x="1695.3999999999999" y="939.00" width="72" height="3.20" fill="#9932CC"/><rect x="1695.3999999999999" y="936.00" width="72" height="3.00" fill="#FAE878"/><rect x="1695.3999999999999" y="933.20" width="72" height="2.80" fill="#B2CFFF"/><rect x="1695.3999999999999" y="931.00" width="72" height="2.20" fill="#FF8A00"/><rect x="1695.3999999999999" y="930.00" width="72" height="1.00" fill="#77FFD6"/><rect x="1695.3999999999999" y="929.10" width="72" height="0.90" fill="#3CC780"/><rect x="1695.3999999999999" y="928.30" width="72" height="0.80" fill="#F0E0B0"/><rect x="1695.3999999999999" y="926.90" width="72" height="1.40" fill="#87C0E8"/><rect x="1775.36" y="1100.80" width="72" height="67.00" fill="#7442D4"/><rect x="1775.36" y="1038.10" width="72" height="62.70" fill="#3CC780"/><rect x="1775.36" y="977.40" width="72" height="60.70" fill="#EFE3FF"/><rect x="1775.36" y="926.00" width="72" height="51.40" fill="#B2CFFF"/><rect x="1775.36" y="877.80" width="72" height="48.20" fill="#B48DEB"/><rect x="1775.36" y="858.60" width="72" height="19.20" fill="#1664FF"/><rect x="1775.36" y="849.00" width="72" height="9.60" fill="#B48DEB"/><rect x="1775.36" y="841.50" width="72" height="7.50" fill="#304D77"/><rect x="1775.36" y="836.30" width="72" height="5.20" fill="#3CC780"/><rect x="1775.36" y="832.00" width="72" height="4.30" fill="#87CEEB"/><rect x="1775.36" y="828.90" width="72" height="3.10" fill="#FF8A00"/><rect x="1775.36" y="828.40" width="72" height="0.50" fill="#FFB070"/><rect x="1775.36" y="825.10" width="72" height="3.30" fill="#FF8A00"/><rect x="1775.36" y="823.00" width="72" height="2.10" fill="#FAE878"/><rect x="1775.36" y="821.90" width="72" height="1.10" fill="#6495ED"/><rect x="1775.36" y="821.00" width="72" height="0.90" fill="#FAE878"/><rect x="1775.36" y="820.10" width="72" height="0.90" fill="#B9EDCD"/><rect x="1775.36" y="818.70" width="72" height="1.40" fill="#A8A8D0"/><rect x="1855.32" y="1050.70" width="72" height="117.10" fill="#B2CFFF"/><rect x="1855.32" y="948.10" width="72" height="102.60" fill="#EFE3FF"/><rect x="1855.32" y="875.40" width="72" height="72.70" fill="#7442D4"/><rect x="1855.32" y="834.50" width="72" height="40.90" fill="#3CC780"/><rect x="1855.32" y="828.90" width="72" height="5.60" fill="#B48DEB"/><rect x="1855.32" y="828.40" width="72" height="0.50" fill="#C8A8F0"/><rect x="1855.32" y="823.00" width="72" height="5.40" fill="#B48DEB"/><rect x="1855.32" y="816.20" width="72" height="6.80" fill="#FF8A00"/><rect x="1855.32" y="814.00" width="72" height="2.20" fill="#87CEEB"/><rect x="1855.32" y="812.40" width="72" height="1.60" fill="#02B1FF"/><rect x="1855.32" y="810.90" width="72" height="1.50" fill="#FAE878"/><rect x="1855.32" y="810.10" width="72" height="0.80" fill="#B070D0"/><rect x="1855.32" y="809.20" width="72" height="0.90" fill="#70A0B0"/><rect x="1855.32" y="808.30" width="72" height="0.90" fill="#6495ED"/><rect x="1855.32" y="807.20" width="72" height="1.10" fill="#B2CFFF"/><rect x="1855.32" y="805.70" width="72" height="1.50" fill="#B8CCDC"/><rect x="1935.28" y="1131.20" width="72" height="36.60" fill="#3CC780"/><rect x="1935.28" y="1130.70" width="72" height="0.50" fill="#8EDDB5"/><rect x="1935.28" y="1098.90" width="72" height="31.80" fill="#3CC780"/><rect x="1935.28" y="1068.60" width="72" height="30.30" fill="#7442D4"/><rect x="1935.28" y="1040.30" width="72" height="28.30" fill="#EFE3FF"/><rect x="1935.28" y="1027.10" width="72" height="13.20" fill="#FF8A00"/><rect x="1935.28" y="1014.50" width="72" height="12.60" fill="#B2CFFF"/><rect x="1935.28" y="1009.30" width="72" height="5.20" fill="#B48DEB"/><rect x="1935.28" y="1004.70" width="72" height="4.60" fill="#87CEEB"/><rect x="1935.28" y="1001.80" width="72" height="2.90" fill="#304D77"/><rect x="1935.28" y="999.80" width="72" height="2.00" fill="#FF8A00"/><rect x="1935.28" y="997.90" width="72" height="1.90" fill="#B2CFFF"/><rect x="1935.28" y="996.60" width="72" height="1.30" fill="#6495ED"/><rect x="1935.28" y="994.90" width="72" height="1.70" fill="#77FFD6"/><rect x="1935.28" y="993.20" width="72" height="1.70" fill="#6495ED"/><rect x="1935.28" y="991.90" width="72" height="1.30" fill="#D0A8D8"/><rect x="1935.28" y="990.30" width="72" height="1.60" fill="#A0C0B8"/><rect x="2015.2399999999998" y="1160.00" width="72" height="7.80" fill="#3CC780"/><rect x="2015.2399999999998" y="1154.80" width="72" height="5.20" fill="#FF8A00"/><rect x="2015.2399999999998" y="1151.00" width="72" height="3.80" fill="#B48DEB"/><rect x="2015.2399999999998" y="1147.10" width="72" height="3.90" fill="#87CEEB"/><rect x="2015.2399999999998" y="1144.90" width="72" height="2.20" fill="#B2CFFF"/><rect x="2015.2399999999998" y="1143.10" width="72" height="1.80" fill="#FAE878"/><rect x="2015.2399999999998" y="1142.00" width="72" height="1.10" fill="#B2CFFF"/><rect x="2015.2399999999998" y="1140.20" width="72" height="1.80" fill="#D8C8B0"/><rect x="2095.2" y="1164.10" width="72" height="3.70" fill="#B48DEB"/><rect x="2095.2" y="1161.00" width="72" height="3.10" fill="#FF8A00"/><rect x="2095.2" y="1159.00" width="72" height="2.00" fill="#FAE878"/><rect x="2095.2" y="1158.00" width="72" height="1.00" fill="#B2CFFF"/><rect x="2095.2" y="1156.30" width="72" height="1.70" fill="#6CD89E"/><rect x="2095.2" y="1154.60" width="72" height="1.70" fill="#9EE8B8"/><rect x="2095.2" y="1153.60" width="72" height="1.00" fill="#D8B8A0"/><rect x="2175.16" y="1161.90" width="72" height="5.90" fill="#7442D4"/><rect x="2175.16" y="1156.10" width="72" height="5.80" fill="#EFE3FF"/><rect x="2175.16" y="1152.50" width="72" height="3.60" fill="#3CC780"/><rect x="2175.16" y="1149.50" width="72" height="3.00" fill="#FF8A00"/><rect x="2175.16" y="1149.10" width="72" height="0.40" fill="#FFB070"/><rect x="2175.16" y="1146.00" width="72" height="3.10" fill="#FF8A00"/><rect x="2175.16" y="1145.20" width="72" height="0.80" fill="#B48DEB"/><rect x="2175.16" y="1143.20" width="72" height="2.00" fill="#C0C8F8"/><rect x="2175.16" y="1141.20" width="72" height="2.00" fill="#FAE878"/><rect x="2175.16" y="1140.20" width="72" height="1.00" fill="#B48DEB"/><rect x="2175.16" y="1139.10" width="72" height="1.10" fill="#87CEEB"/><rect x="2255.12" y="1015.70" width="72" height="152.10" fill="#3CC780"/><rect x="2255.12" y="960.80" width="72" height="54.90" fill="#EFE3FF"/><rect x="2255.12" y="912.10" width="72" height="48.70" fill="#7442D4"/><rect x="2255.12" y="871.00" width="72" height="41.10" fill="#B2CFFF"/><rect x="2255.12" y="867.80" width="72" height="3.20" fill="#B48DEB"/><rect x="2255.12" y="866.00" width="72" height="1.80" fill="#FF8A00"/><rect x="2255.12" y="864.90" width="72" height="1.10" fill="#B9EDCD"/><rect x="2255.12" y="863.60" width="72" height="1.30" fill="#A8A8D0"/><rect x="2255.12" y="862.10" width="72" height="1.50" fill="#C8D0A8"/><rect x="2335.08" y="1153.90" width="72" height="13.90" fill="#B2CFFF"/><rect x="2335.08" y="1140.20" width="72" height="13.70" fill="#EFE3FF"/><rect x="2335.08" y="1129.80" width="72" height="10.40" fill="#7442D4"/><rect x="2335.08" y="1126.80" width="72" height="3.00" fill="#3CC780"/><rect x="2335.08" y="1125.80" width="72" height="1.00" fill="#E0C8A0"/><rect x="472" y="1167.20" width="1959" height="1.7" fill="#404347"/><rect x="531.25" y="1167.8" width="1.5" height="6" fill="#404347"/><rect x="691.17" y="1167.8" width="1.5" height="6" fill="#404347"/><rect x="851.0899999999999" y="1167.8" width="1.5" height="6" fill="#404347"/><rect x="1011.01" y="1167.8" width="1.5" height="6" fill="#404347"/><rect x="1170.9299999999998" y="1167.8" width="1.5" height="6" fill="#404347"/><rect x="1330.85" y="1167.8" width="1.5" height="6" fill="#404347"/><rect x="1490.77" y="1167.8" width="1.5" height="6" fill="#404347"/><rect x="1650.6899999999998" y="1167.8" width="1.5" height="6" fill="#404347"/><rect x="1810.61" y="1167.8" width="1.5" height="6" fill="#404347"/><rect x="1970.53" y="1167.8" width="1.5" height="6" fill="#404347"/><rect x="2130.45" y="1167.8" width="1.5" height="6" fill="#404347"/><rect x="2290.37" y="1167.8" width="1.5" height="6" fill="#404347"/></svg>
<div class="t" style="right:2070px;top:1158.01px;font-size:17px;line-height:17px;color:#3B3E42;font-weight:400;">0</div>
<div class="t" style="right:2070px;top:1069.54px;font-size:17px;line-height:17px;color:#3B3E42;font-weight:400;">20</div>
<div class="t" style="right:2070px;top:981.07px;font-size:17px;line-height:17px;color:#3B3E42;font-weight:400;">40</div>
<div class="t" style="right:2070px;top:892.60px;font-size:17px;line-height:17px;color:#3B3E42;font-weight:400;">60</div>
<div class="t" style="right:2070px;top:804.13px;font-size:17px;line-height:17px;color:#3B3E42;font-weight:400;">80</div>
<div class="t" style="right:2070px;top:715.66px;font-size:17px;line-height:17px;color:#3B3E42;font-weight:400;">100</div>
<div class="t" style="left:232.0px;width:600px;text-align:center;top:1185.16px;font-size:17.3px;line-height:17.3px;color:#3B3E42;font-weight:400;">12-30 23:00</div>
<div class="t" style="left:391.91999999999996px;width:600px;text-align:center;top:1185.16px;font-size:17.3px;line-height:17.3px;color:#3B3E42;font-weight:400;">12-31 01:00</div>
<div class="t" style="left:551.8399999999999px;width:600px;text-align:center;top:1185.16px;font-size:17.3px;line-height:17.3px;color:#3B3E42;font-weight:400;">12-31 03:00</div>
<div class="t" style="left:711.76px;width:600px;text-align:center;top:1185.16px;font-size:17.3px;line-height:17.3px;color:#3B3E42;font-weight:400;">12-31 05:00</div>
<div class="t" style="left:871.6799999999998px;width:600px;text-align:center;top:1185.16px;font-size:17.3px;line-height:17.3px;color:#3B3E42;font-weight:400;">12-31 07:00</div>
<div class="t" style="left:1031.6px;width:600px;text-align:center;top:1185.16px;font-size:17.3px;line-height:17.3px;color:#3B3E42;font-weight:400;">12-31 09:00</div>
<div class="t" style="left:1191.52px;width:600px;text-align:center;top:1185.16px;font-size:17.3px;line-height:17.3px;color:#3B3E42;font-weight:400;">12-31 11:00</div>
<div class="t" style="left:1351.4399999999998px;width:600px;text-align:center;top:1185.16px;font-size:17.3px;line-height:17.3px;color:#3B3E42;font-weight:400;">12-31 13:00</div>
<div class="t" style="left:1511.36px;width:600px;text-align:center;top:1185.16px;font-size:17.3px;line-height:17.3px;color:#3B3E42;font-weight:400;">12-31 15:00</div>
<div class="t" style="left:1671.28px;width:600px;text-align:center;top:1185.16px;font-size:17.3px;line-height:17.3px;color:#3B3E42;font-weight:400;">12-31 17:00</div>
<div class="t" style="left:1831.1999999999998px;width:600px;text-align:center;top:1185.16px;font-size:17.3px;line-height:17.3px;color:#3B3E42;font-weight:400;">12-31 19:00</div>
<div class="t" style="left:1991.12px;width:600px;text-align:center;top:1185.16px;font-size:17.3px;line-height:17.3px;color:#3B3E42;font-weight:400;">12-31 21:00</div>
<div style="position:absolute;left:477px;top:1235.5px;width:15px;height:15px;background:#EFE3FF;border-radius:1px"></div>
<div class="t" style="left:501.3px;top:1233.42px;font-size:18.4px;line-height:18.4px;color:#5E6166;font-weight:400;">chatgpt-4o-latest</div>
<div style="position:absolute;left:671.3px;top:1235.5px;width:15px;height:15px;background:#B48DEB;border-radius:1px"></div>
<div class="t" style="left:696.1px;top:1233.42px;font-size:18.4px;line-height:18.4px;color:#5E6166;font-weight:400;">gpt-4o</div>
<div style="position:absolute;left:775.1px;top:1235.5px;width:15px;height:15px;background:#B2CFFF;border-radius:1px"></div>
<div class="t" style="left:799.2px;top:1233.42px;font-size:18.4px;line-height:18.4px;color:#5E6166;font-weight:400;">gpt-4o-mini</div>
<div style="position:absolute;left:923.6px;top:1235.5px;width:15px;height:15px;background:#3CC780;border-radius:1px"></div>
<div class="t" style="left:948px;top:1233.42px;font-size:18.4px;line-height:18.4px;color:#5E6166;font-weight:400;">gpt-4o-2024-11-20</div>
<div style="position:absolute;left:1134.9px;top:1235.5px;width:15px;height:15px;background:#FF8A00;border-radius:1px"></div>
<div class="t" style="left:1159.3px;top:1233.42px;font-size:18.4px;line-height:18.4px;color:#5E6166;font-weight:400;">claude-3-5-sonnet-20241022</div>
<div style="position:absolute;left:1430.7px;top:1235.5px;width:15px;height:15px;background:#3CC780;border-radius:1px"></div>
<div class="t" style="left:1455.4px;top:1233.42px;font-size:18.4px;line-height:18.4px;color:#5E6166;font-weight:400;">gpt-4o-2024-08-06</div>
<div style="position:absolute;left:1642.3px;top:1235.5px;width:15px;height:15px;background:#77FFD6;border-radius:1px"></div>
<div class="t" style="left:1666.4px;top:1233.42px;font-size:18.4px;line-height:18.4px;color:#5E6166;font-weight:400;">gpt-3.5-turbo-16k-0613</div>
<div style="position:absolute;left:1891.8px;top:1235.5px;width:15px;height:15px;background:#FF8A00;border-radius:1px"></div>
<div class="t" style="left:1916.2px;top:1233.42px;font-size:18.4px;line-height:18.4px;color:#5E6166;font-weight:400;">gpt-3.5-turbo-0125</div>
<div style="position:absolute;left:2104px;top:1235.5px;width:15px;height:15px;background:#02B1FF;border-radius:1px"></div>
<div class="t" style="left:2128.5px;top:1233.42px;font-size:18.4px;line-height:18.4px;color:#5E6166;font-weight:400;">gpt-4-turbo-preview</div>
<div style="position:absolute;left:477px;top:1273.5px;width:15px;height:15px;background:#87CEEB;border-radius:1px"></div>
<div class="t" style="left:501.3px;top:1271.42px;font-size:18.4px;line-height:18.4px;color:#5E6166;font-weight:400;">gpt-4</div>
<div style="position:absolute;left:569.3px;top:1273.5px;width:15px;height:15px;background:#FAE878;border-radius:1px"></div>
<div class="t" style="left:593.4px;top:1271.42px;font-size:18.4px;line-height:18.4px;color:#5E6166;font-weight:400;">gpt-4-turbo</div>
<div style="position:absolute;left:716.3px;top:1273.5px;width:15px;height:15px;background:#9932CC;border-radius:1px"></div>
<div class="t" style="left:741.1px;top:1271.42px;font-size:18.4px;line-height:18.4px;color:#5E6166;font-weight:400;">dall-e-3</div>
<div style="position:absolute;left:828.7px;top:1273.5px;width:15px;height:15px;background:#7442D4;border-radius:1px"></div>
<div class="t" style="left:853px;top:1271.42px;font-size:18.4px;line-height:18.4px;color:#5E6166;font-weight:400;">claude-3-5-sonnet-all</div>
<div style="position:absolute;left:1060.2px;top:1273.5px;width:15px;height:15px;background:#59BAA8;border-radius:1px"></div>
<div class="t" style="left:1084.5px;top:1271.42px;font-size:18.4px;line-height:18.4px;color:#5E6166;font-weight:400;">claude-3-5-sonnet-20240620</div>
<div style="position:absolute;left:1355.9px;top:1273.5px;width:15px;height:15px;background:#02B1EC;border-radius:1px"></div>
<div class="t" style="left:1380.6px;top:1271.42px;font-size:18.4px;line-height:18.4px;color:#5E6166;font-weight:400;">gpt-4-0125-preview</div>
<div style="position:absolute;left:1572.8px;top:1273.5px;width:15px;height:15px;background:#B48DEB;border-radius:1px"></div>
<div class="t" style="left:1597.5px;top:1271.42px;font-size:18.4px;line-height:18.4px;color:#5E6166;font-weight:400;">gpt-4o-mini-2024-07-18</div>
<div style="position:absolute;left:1829.3px;top:1273.5px;width:15px;height:15px;background:#7442D4;border-radius:1px"></div>
<div class="t" style="left:1853.9px;top:1271.42px;font-size:18.4px;line-height:18.4px;color:#5E6166;font-weight:400;">gemini-2.0-flash-thinking-exp-1219</div>
<div style="position:absolute;left:2182.4px;top:1273.5px;width:15px;height:15px;background:#B48DEB;border-radius:1px"></div>
<div class="t" style="left:2206.8px;top:1271.42px;font-size:18.4px;line-height:18.4px;color:#5E6166;font-weight:400;">o1-preview</div>
<svg style="position:absolute;left:2356px;top:1231px" width="22" height="64" viewBox="0 0 22 64"><path d="M10.5 2 L17 16 H4 Z" fill="#ABABAB"/><path d="M4 46 H17 L10.5 61 Z" fill="#2C3E50"/></svg>
<div class="t" style="left:2066px;width:600px;text-align:center;top:1252.49px;font-size:17.5px;line-height:17.5px;color:#2B2E33;font-weight:400;">1/3</div>
</body></html>
